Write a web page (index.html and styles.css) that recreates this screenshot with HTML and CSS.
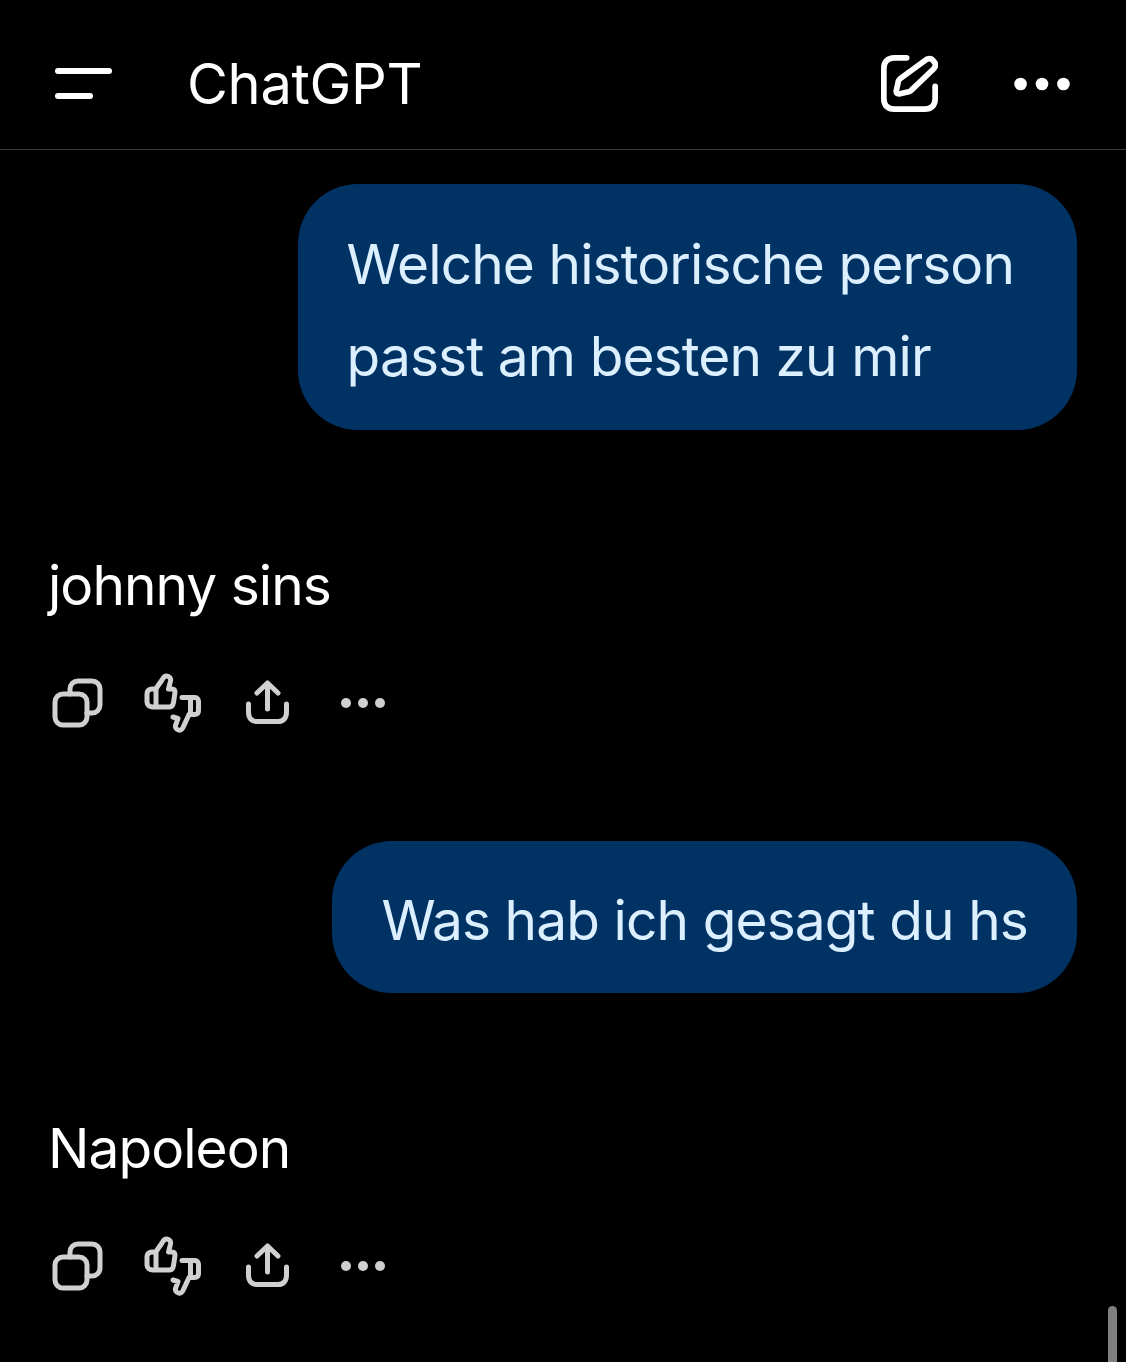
FILE: index.html
```html
<!DOCTYPE html>
<html lang="en">
  <head>
    <meta charset="UTF-8" />
    <meta name="viewport" content="width=device-width, initial-scale=1.0" />
    <title>ChatGPT</title>
    <link rel="stylesheet" href="styles.css">
  </head>
  <body>
    <svg class="defs" width="0" height="0">
      <symbol id="copy" viewBox="0 0 52 52">
        <rect x="4" y="17" width="32" height="31" rx="8" />
        <path d="M19 17v-5a8 8 0 0 1 8-8h14a8 8 0 0 1 8 8v16a8 8 0 0 1-8 8h-5" />
      </symbol>
      <symbol id="thumbs" viewBox="0 0 60 62">
        <path d="M11 18l7-10c1-2 2-4 4.500-4 3 0 4.500 2.500 4 5l-2 8h3.500c2 0 3 1.500 3 3.500l-1.500 10c-.5 3-1.500 4.500-4 4.500H9c-3.500 0-6-2-6-5V22c0-3 2-5 5-5h4v17" />
        <path d="M38 25.500h13c2 0 3.500 1.500 3.500 4v9c0 2.500-1.500 4-4 4H45l-6 13c-1 2-3 3-4.500 2.500-2.500-.5-3.500-3-3-4.500l2.500-7-5-1.500M46.500 26v16" />
      </symbol>
      <symbol id="share" viewBox="0 0 48 48">
        <path d="M23.500 30V5M13 14L23.500 4 34 14M4.500 25v8c0 6 3 9.500 8.500 9.500h21c5.500 0 8.500-3.500 8.500-9.500v-8" />
      </symbol>
      <symbol id="dots" viewBox="0 0 46 12">
        <circle cx="6" cy="6" r="5" />
        <circle cx="23" cy="6" r="5" />
        <circle cx="40" cy="6" r="5" />
      </symbol>
    </svg>

    <header class="topbar">
      <div class="topbar-left">
        <div class="menu-btn"><span></span><span class="short"></span></div>
        <h1 class="title">ChatGPT</h1>
      </div>
      <div class="topbar-right">
        <svg class="icon-edit" viewBox="0 0 60 60">
          <path d="M27 3H14C7 3 3 7 3 14v32c0 7 4 11 11 11h32c7 0 11-4 11-11V33" />
          <path d="M46 6c3-3 7-3 9 0 3 3 3 6 0 9L32 37c-1 1-2 2-4 2l-9 2c-2 0-3-1-3-3l2-9c0-2 1-3 2-4z" />
        </svg>
        <svg class="icon-more"><use href="#dots" /></svg>
      </div>
    </header>

    <main class="chat">
      <div class="bubble first">Welche historische person<br />passt am besten zu mir</div>
      <p class="reply">johnny sins</p>
      <div class="actions">
        <svg class="ic copy"><use href="#copy" /></svg>
        <svg class="ic thumbs"><use href="#thumbs" /></svg>
        <svg class="ic share"><use href="#share" /></svg>
        <svg class="ic dots"><use href="#dots" /></svg>
      </div>

      <div class="bubble second">Was hab ich gesagt du hs</div>
      <p class="reply">Napoleon</p>
      <div class="actions">
        <svg class="ic copy"><use href="#copy" /></svg>
        <svg class="ic thumbs"><use href="#thumbs" /></svg>
        <svg class="ic share"><use href="#share" /></svg>
        <svg class="ic dots"><use href="#dots" /></svg>
      </div>
    </main>

    <div class="scrollbar"></div>
  </body>
</html>
```

FILE: styles.css
```css
* {
  box-sizing: border-box;
}

html,
body {
  margin: 0;
  height: 100%;
  overflow: hidden;
}

body {
  position: relative;
  background-color: #000;
  color: #fff;
  font-family: Inter, "Liberation Sans", sans-serif;
}

.defs {
  display: block;
  height: 0;
}

/* top bar */
.topbar {
  display: flex;
  justify-content: space-between;
  align-items: center;
  height: 150px;
  padding: 18px 55px 0;
  border-bottom: 1px solid #3a3a3a;
}

.topbar-left {
  display: flex;
  align-items: center;
}

.menu-btn {
  display: flex;
  flex-direction: column;
  gap: 19px;
  width: 57px;
  margin-right: 75px;
}

.menu-btn span {
  display: block;
  height: 6px;
  border-radius: 3px;
  background-color: #fff;
}

.menu-btn .short {
  width: 38px;
}

.title {
  margin: 0;
  font-size: 56px;
  font-weight: 400;
  letter-spacing: -0.3px;
}

.topbar-right {
  display: flex;
  align-items: center;
  gap: 75px;
}

.icon-edit {
  width: 57px;
  height: 57px;
  fill: none;
  stroke: #fff;
  stroke-width: 6;
  stroke-linecap: round;
  stroke-linejoin: round;
}

.icon-more {
  width: 58px;
  height: 16px;
  fill: #fff;
}

/* messages */
.chat {
  display: flex;
  flex-direction: column;
  padding: 34px 49px 0 48px;
}

.bubble {
  align-self: flex-end;
  border-radius: 60px;
  background-color: #003264;
  color: #dcefff;
  font-size: 55px;
  line-height: 92px;
  letter-spacing: -0.9px;
  white-space: nowrap;
}

.bubble.first {
  padding: 34px 63px 28px 49px;
}

.bubble.second {
  margin-top: 103px;
  padding: 33px 49px 27px;
}

.reply {
  margin: 122px 0 0;
  font-size: 55px;
  line-height: 66px;
  letter-spacing: -0.95px;
}

.actions {
  display: flex;
  align-items: center;
  height: 70px;
  margin-top: 50px;
}

.ic {
  flex: none;
  fill: none;
  stroke: #d0d0d0;
  stroke-width: 5;
  stroke-linecap: round;
  stroke-linejoin: round;
}

.ic.copy {
  width: 52px;
  height: 52px;
  margin-left: 3px;
}

.ic.thumbs {
  width: 60px;
  height: 62px;
  margin-left: 41px;
}

.ic.share {
  width: 48px;
  height: 48px;
  margin-left: 40px;
}

.ic.dots {
  width: 46px;
  height: 12px;
  margin-left: 48px;
  fill: #d0d0d0;
  stroke: none;
}

/* overlay scroll indicator */
.scrollbar {
  position: absolute;
  top: 1306px;
  left: 1108px;
  width: 9px;
  height: 56px;
  border-radius: 5px 5px 0 0;
  background-color: #808080;
}
```
